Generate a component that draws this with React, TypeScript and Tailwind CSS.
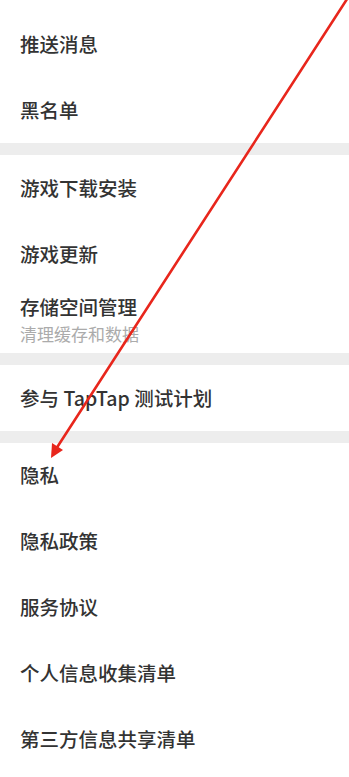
import React from "react";

const Row = ({ title }: { title: string }) => (
  <div className="h-[66px] flex items-center pl-5">
    <span className="text-[19.5px] leading-6 font-medium text-[#333333]">{title}</span>
  </div>
);

const Band = () => <div className="h-3 bg-[#ededed]" />;

export default function App() {
  return (
    <div
      className="relative w-[349px] h-[777px] overflow-hidden bg-white"
      style={{ fontFamily: '"Noto Sans CJK SC", "Noto Sans", sans-serif' }}
    >
      <div className="flex flex-col pt-[11px]">
        <Row title="推送消息" />
        <Row title="黑名单" />
        <Band />
        <Row title="游戏下载安装" />
        <Row title="游戏更新" />
        <div className="h-[66px] flex flex-col justify-center pl-5 gap-1">
          <span className="text-[19.5px] leading-6 font-medium text-[#333333]">存储空间管理</span>
          <span className="text-[17px] leading-[22px] text-[#ababab]">清理缓存和数据</span>
        </div>
        <Band />
        <Row title="参与 TapTap 测试计划" />
        <Band />
        <div className="flex flex-col -mt-px">
          <Row title="隐私" />
          <Row title="隐私政策" />
          <Row title="服务协议" />
          <Row title="个人信息收集清单" />
          <Row title="第三方信息共享清单" />
        </div>
      </div>
      <svg
        className="absolute inset-0 pointer-events-none"
        width="349"
        height="777"
        viewBox="0 0 349 777"
      >
        <line x1="349" y1="-4" x2="56" y2="449" stroke="#e8261c" strokeWidth="2.6" strokeLinecap="round" />
        <polygon points="51,458 52,443 63,450" fill="#e8261c" />
      </svg>
    </div>
  );
}
